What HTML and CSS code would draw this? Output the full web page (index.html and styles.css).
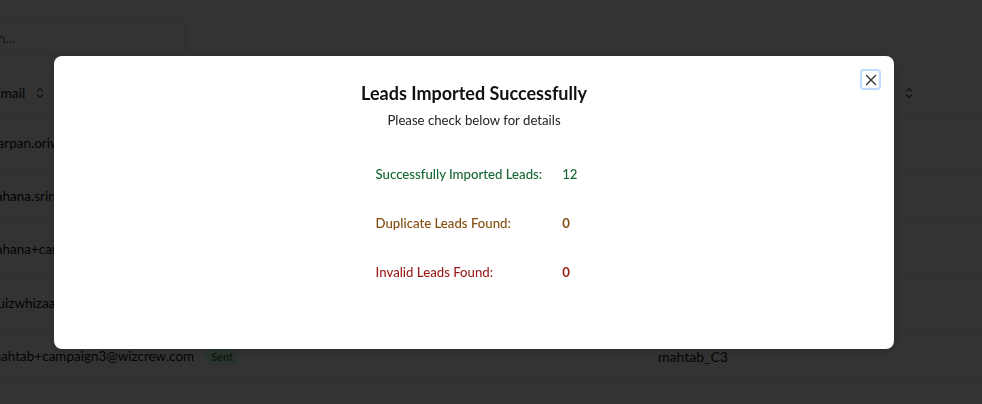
FILE: index.html
```html
<!DOCTYPE html>
<html>
<head>
<meta charset="utf-8">
<link rel="stylesheet" href="styles.css">
</head>
<body>
<div class="page">
  <div class="search"><span class="ph">Search...</span></div>
  <div class="table">
    <div class="row head">
      <div class="c-email">Email <span class="sort"><svg width="8" height="12" viewBox="0 0 8 12"><path d="M1 4.5 L4 1.5 L7 4.5 M1 7.5 L4 10.5 L7 7.5" fill="none" stroke="#555" stroke-width="1.2"/></svg></span></div>
      <div class="c-mid"></div>
      <div class="c-name">Name</div>
      <div class="c-sort"><svg width="8" height="12" viewBox="0 0 8 12"><path d="M1 4.5 L4 1.5 L7 4.5 M1 7.5 L4 10.5 L7 7.5" fill="none" stroke="#555" stroke-width="1.2"/></svg></div>
    </div>
    <div class="row"><div class="c-email">darpan.oriwizcrew@gmail.com</div><div class="c-mid"></div><div class="c-name">darpan</div><div class="c-sort"></div></div>
    <div class="row"><div class="c-email">sahana.srinivas@wizcrew.com</div><div class="c-mid"></div><div class="c-name">sahana</div><div class="c-sort"></div></div>
    <div class="row"><div class="c-email">sahana+campaign@wizcrew.com</div><div class="c-mid"></div><div class="c-name">sahana_C</div><div class="c-sort"></div></div>
    <div class="row"><div class="c-email">quizwhizaa@wizcrew.com</div><div class="c-mid"></div><div class="c-name">quiz</div><div class="c-sort"></div></div>
    <div class="row"><div class="c-email">mahtab+campaign3@wizcrew.com <span class="badge">Sent</span></div><div class="c-mid"></div><div class="c-name">mahtab_C3</div><div class="c-sort"></div></div>
    <div class="row"><div class="c-email"></div><div class="c-mid"></div><div class="c-name"></div><div class="c-sort"></div></div>
  </div>
</div>

<div class="overlay">
  <div class="modal">
    <button class="close" aria-label="Close"><svg width="12" height="12" viewBox="0 0 12 12"><path d="M1.5 1.5 L10.5 10.5 M10.5 1.5 L1.5 10.5" stroke="#333" stroke-width="1.4" stroke-linecap="round"/></svg></button>
    <h2 class="title">Leads Imported Successfully</h2>
    <p class="sub">Please check below for details</p>
    <div class="stats">
      <div class="lbl green">Successfully Imported Leads:</div><div class="val green">12</div>
      <div class="lbl brown">Duplicate Leads Found:</div><div class="val brown bold">0</div>
      <div class="lbl red">Invalid Leads Found:</div><div class="val red bold">0</div>
    </div>
  </div>
</div>
</body>
</html>
```
FILE: styles.css
```css
* { box-sizing: border-box; }
html, body { margin: 0; padding: 0; }
body {
  background: #fff;
  font-family: "Lato", "Noto Sans", sans-serif;
  color: #111;
  overflow: hidden;
  width: 982px;
  height: 404px;
}
.page {
  padding-top: 17px;
  margin-left: -30px;
}
.search {
  margin-left: -15px;
  width: 231px;
  height: 38px;
  border: 1px solid #e5e7eb;
  border-radius: 6px;
  display: flex;
  align-items: center;
  padding-left: 8px;
  padding-top: 3px;
  font-size: 14px;
  color: #6b7280;
}
.table {
  margin-top: 15px;
  width: 1040px;
}
.row {
  display: flex;
  align-items: center;
  height: 53.4px;
  border-bottom: 1px solid #e5e7eb;
  font-size: 13.5px;
}
.row.head {
  height: 46.5px;
  font-weight: 600;
  color: #333;
}
.c-email {
  width: 600px;
  padding-left: 23px;
  display: flex;
  align-items: center;
  white-space: nowrap;
}
.row .c-email { padding-left: 20px; }
.row.head .c-email { padding-left: 23px; }
.sort { margin-left: 11px; display: inline-flex; }
.c-mid { width: 88px; }
.c-name { width: 247px; font-size: 14px; }
.c-sort { width: 60px; display: flex; }
.badge {
  margin-left: 10px;
  font-size: 11px;
  color: #15803d;
  background: #dcfce7;
  border-radius: 10px;
  padding: 3px 7px;
  font-weight: 600;
}
.overlay {
  position: fixed;
  inset: 0;
  background: rgba(0, 0, 0, 0.8);
  padding: 56px 0 0 54px;
}
.modal {
  position: relative;
  width: 840px;
  height: 293px;
  background: #fff;
  border-radius: 8px;
  box-shadow: 0 2px 8px rgba(0,0,0,0.2);
  display: flex;
  flex-direction: column;
  align-items: center;
  padding-top: 25px;
}
.close {
  position: absolute;
  top: 13px;
  right: 13px;
  width: 21px;
  height: 21px;
  border: 2px solid #bfdbfe;
  border-radius: 4px;
  background: #fff;
  display: flex;
  align-items: center;
  justify-content: center;
  padding: 0;
}
.title {
  margin: 0;
  font-size: 18px;
  line-height: 25px;
  font-weight: 700;
  color: #111;
}
.sub {
  margin: 5px 0 0;
  font-size: 13.2px;
  line-height: 18px;
  color: #222;
}
.stats {
  margin-top: 36px;
  margin-left: 5px;
  display: grid;
  grid-template-columns: auto auto;
  column-gap: 20px;
  row-gap: 31px;
  font-size: 13.2px;
  line-height: 18px;
  font-weight: 500;
}
.val { min-width: 12px; }
.bold { font-weight: 700; }
.green { color: #166534; }
.brown { color: #854d0e; }
.red { color: #991b1b; }
```
